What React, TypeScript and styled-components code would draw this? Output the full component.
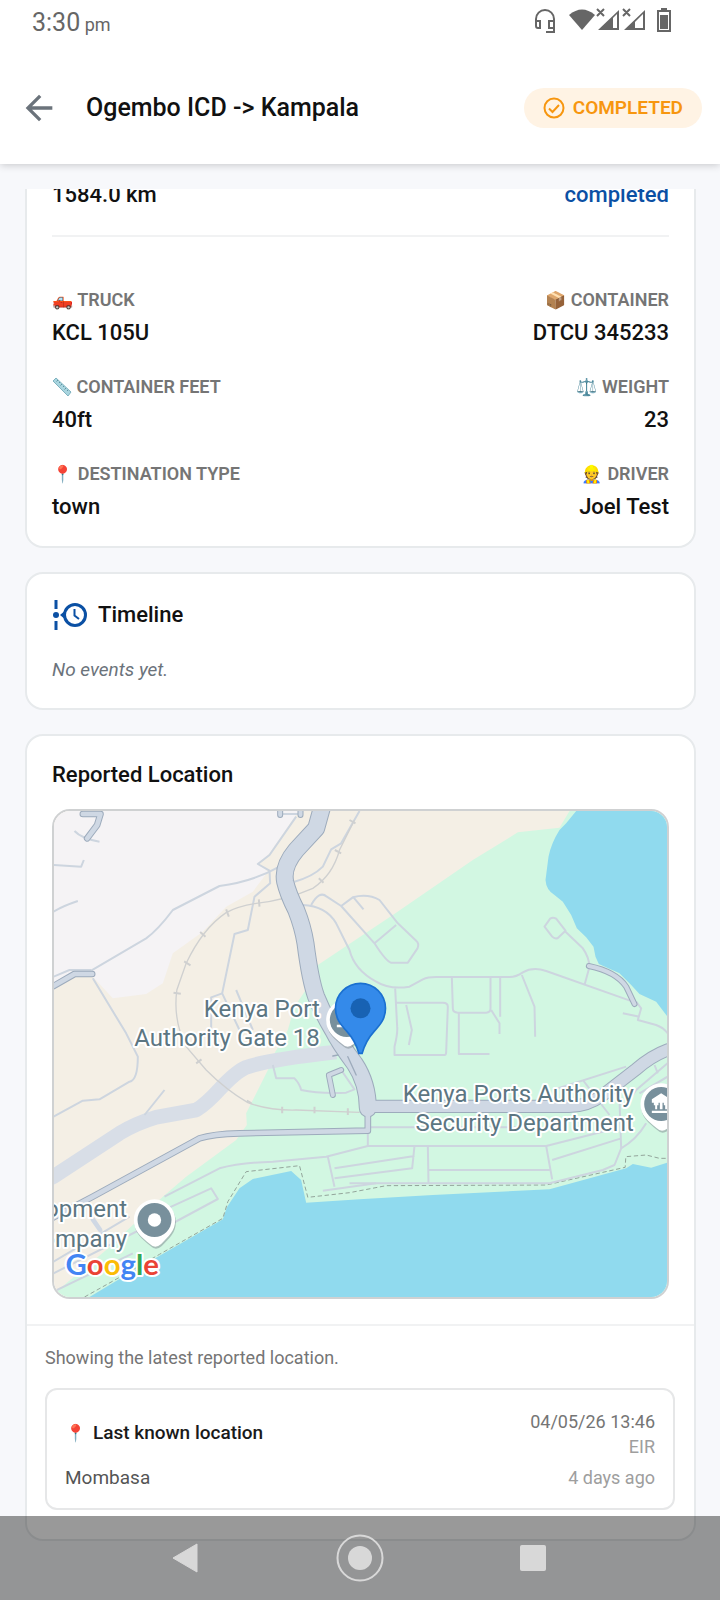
import styled, { createGlobalStyle } from "styled-components";
import { MdArrowBack } from "react-icons/md";

const RulerIcon = () => (
  <InlineSvg width="20" height="20" viewBox="0 0 20 20" aria-hidden="true">
    <path d="M1 4L4 1L19 15L16 19Z" fill="#a9d5df" stroke="#7fb3c0" strokeWidth="1" strokeLinejoin="round" />
    <path d="M6 3L4.500 4.500M8 5L7 6M10 7L8.500 8.500M12 9L11 10M14 11L12.500 12.500M16 13L15 14" stroke="#5f94a3" strokeWidth="1" />
  </InlineSvg>
);

const details = [
  { icon: "🛻", label: "TRUCK", value: "KCL 105U" },
  { icon: "📦", label: "CONTAINER", value: "DTCU 345233" },
  { icon: <RulerIcon />, label: "CONTAINER FEET", value: "40ft" },
  { icon: "⚖️", label: "WEIGHT", value: "23" },
  { icon: "📍", label: "DESTINATION TYPE", value: "town" },
  { icon: "👷", label: "DRIVER", value: "Joel Test" },
];

const minorRoads = [
  "M155 512L320 415Q355 390 400 330L540 258Q640 245 720 200",
  "M770 50L690 165L655 192L690 212L692 250L645 290L625 390L585 402L548 580L600 690",
  "M548 580L515 592V690M590 570L640 690",
  "M960 33L905 130L875 148L850 200Q820 230 765 245",
  "M790 315Q860 318 890 370L930 450Q945 510 1010 545Q1050 570 1110 560L1150 538Q1165 531 1190 531H1410Q1430 531 1450 517Q1480 500 1520 513L1780 605",
  "M815 315Q840 270 862 290L905 318L940 292Q985 280 1020 300L1075 370L1130 422Q1140 430 1134 445L1105 488H1055Q1040 485 1005 430L1070 375M905 318L1005 430M942 292L972 328",
  "M1067 565L1073 680Q1075 700 1065 740V765H1215Q1220 765 1220 755L1225 620Q1225 608 1210 608H1070M1100 615L1117 690L1108 735",
  "M1237 531L1240 625Q1240 638 1255 638H1340Q1353 638 1353 625V531M1258 638V762H1350M1355 630L1380 670V702M1382 533V650",
  "M1447 525L1485 620L1487 710",
  "M1515 380L1532 356Q1540 350 1550 356L1578 392L1555 414Q1546 418 1538 410ZM1578 395L1630 445Q1648 470 1650 500L1635 555",
  "M1790 605L1805 625L1795 660L1850 675Q1875 685 1884 700M1750 640L1800 650",
  "M42 195L125 200L133 180M42 335Q70 318 115 303M105 93Q125 115 180 125M42 530L90 510H155M722 42H783",
  "M160 535L260 700L295 770Q295 840 270 845L180 898L130 902L42 950M375 870L315 945",
  "M700 795L710 835H765Q780 850 785 870Q840 882 920 878L945 868L905 810",
  "M375 1190L540 1105Q600 1088 700 1085L860 1070L985 1038H1520L1730 985",
  "M865 1070L885 1160M885 1105L1125 1068M885 1135L1118 1105L1125 1038M850 1172L1010 1150M1165 1038L1167 1150M1167 1110H1530M1520 1038L1538 1138",
  "M1538 1080L1745 1015M1740 900L1745 1045L1725 1095L1690 1110L1530 1150H930M1745 1045Q1790 1020 1820 970M985 950V1038M985 982H1440M1630 840L1710 945M1540 870L1760 800",
  "M330 1250L515 1165L535 1197L390 1275M42 1385L270 1250M42 1420L300 1290M42 1475L280 1360",
  "M1884 790L1790 870L1770 900M1884 830L1800 880M1845 795L1855 820",
];

const casedRoads = [
  { d: "M130 42H183L173 75L143 115", width: 14 },
  { d: "M42 558L105 522H158", width: 14 },
  { d: "M722 33V45M783 33V45", width: 12 },
  { d: "M905 810L868 825L880 885", width: 12 },
  { d: "M1648 498Q1730 515 1760 560L1785 612", width: 12 },
  { d: "M42 1252L160 1190L480 1015Q520 1002 600 1000L985 992V930", width: 14 },
  { d: "M985 919H1580Q1640 922 1690 885L1790 808Q1835 768 1884 750", width: 34 },
  { d: "M848 20L830 85L770 150Q728 200 737 245Q745 280 770 330Q790 380 798 430Q812 540 830 590Q850 640 880 690Q900 730 945 790Q985 850 985 925", width: 48 },
];

const Label = ({ x, y, children }: { x: number; y: number; children: string }) => (
  <MapText x={x} y={y} textAnchor="end">
    {children}
  </MapText>
);

const PlacePin = ({ x, y, children }: { x: number; y: number; children?: React.ReactNode }) => (
  <g transform={`translate(${x} ${y})`}>
    <path
      d="M-62 0A62 62 0 1 1 62 0C62 34 42 48 20 72Q2 88 -14 72C-42 48 -62 34 -62 0Z"
      fill="#7d8a90"
      opacity="0.5"
      transform="translate(2 6)"
    />
    <path d="M-62 0A62 62 0 1 1 62 0C62 34 42 48 20 72Q2 88 -14 72C-42 48 -62 34 -62 0Z" fill="#fff" />
    <circle r="51" fill="#78909c" />
    {children}
  </g>
);

const MapDrawing = () => (
  <MapSvg viewBox="42 33 1842 1458" preserveAspectRatio="xMidYMid slice" role="img" aria-label="Map of the reported location">
    <rect x="0" y="0" width="1930" height="1530" fill="#f4efe5" />
    <path
      d="M0 0H800L690 160L655 192L685 215L640 275L560 320L490 395L400 460L370 550L320 582L220 595L155 525L100 520L0 580Z"
      fill="#f5f3f5"
    />
    <path
      d="M1560 83L1435 97L1300 180L1060 345L835 495L795 575L765 620L745 690L705 760L690 800L620 940L622 975L590 1020L440 1130L370 1190L200 1350L50 1475L0 1530H1930V0H1610Z"
      fill="#d2f7e2"
    />
    <path
      d="M1630 0L1610 33L1580 70L1560 90Q1535 130 1527 170L1518 240Q1520 270 1545 285L1570 305L1595 345L1612 385L1640 412L1662 440L1668 470L1678 492L1740 520L1775 555L1800 582L1850 605L1884 650L1930 700V0Z"
      fill="#90daee"
    />
    <path
      d="M80 1530L150 1491L240 1437L360 1367L550 1258L562 1222L600 1165L640 1137L755 1113L785 1140L800 1208L960 1198L1180 1185L1530 1168L1760 1105L1780 1092L1835 1103L1884 1088L1930 1080V1530Z"
      fill="#90daee"
    />
    <path
      d="M135 1491L240 1432L360 1363L550 1255L565 1205L620 1115L780 1097L805 1192L930 1178L1040 1157L1520 1155L1757 1102L1759 1070L1820 1065L1860 1075H1884"
      fill="none"
      stroke="#93a59b"
      strokeWidth="3"
      strokeDasharray="13 8"
    />
    <g fill="none" stroke="#cdd5df" strokeLinejoin="round">
      <path d="M0 1150L42 1130L240 1000Q290 970 350 952L470 930Q500 912 540 868Q590 815 620 802Q680 780 890 756" stroke="#d8dee7" strokeWidth="44" />
      {minorRoads.map((d) => (
        <path key={d} d={d} strokeWidth="6" />
      ))}
    </g>
    <g fill="none" stroke="#cfd0d0">
      <path
        d="M945 60L900 150Q880 225 820 265Q740 300 650 310Q590 320 560 338Q490 385 440 490L412 570Q400 660 440 740L500 810Q560 870 625 908Q690 932 770 930L960 937"
        strokeWidth="4"
      />
      <path
        d="M930 60L948 70M886 150L905 160M838 235L852 248M658 298L660 320M560 328L568 350M482 396L498 410M434 484L453 496M402 578L424 581M470 790L486 778M622 902L636 910M728 920V940M825 920V940M925 925V945"
        strokeWidth="6"
      />
    </g>
    <g fill="none" strokeLinejoin="round" strokeLinecap="round">
      {casedRoads.map(({ d, width }) => (
        <path key={d} d={d} stroke="#9dabbc" strokeWidth={width + 6} />
      ))}
      {casedRoads.map(({ d, width }) => (
        <path key={d} d={d} stroke="#cfd8e4" strokeWidth={width} />
      ))}
      <path d="M880 768L895 765M925 770L950 825" stroke="#9dabbc" strokeWidth="4" />
      <path d="M160 1258L182 1290" stroke="#cfd8e4" strokeWidth="14" />
    </g>

    <PlacePin x={922} y={660}>
      <path d="M-30 18H20M-22 -8H10" stroke="#fff" strokeWidth="7" />
    </PlacePin>
    <PlacePin x={345} y={1260}>
      <circle r="20" fill="#fff" />
    </PlacePin>
    <PlacePin x={1865} y={912}>
      <path
        d="M0 -32L28 -14V-4H-28V-14ZM-22 -4H-8V4H-12V16H-18V4H-22ZM-4 -4H4V16H-4ZM8 -4H22V4H18V16H12V4H8ZM-28 20H28V27H-28Z"
        fill="#fff"
      />
    </PlacePin>

    <Label x={841} y={650}>Kenya Port</Label>
    <Label x={841} y={738}>Authority Gate 18</Label>
    <Label x={1783} y={907}>Kenya Ports Authority</Label>
    <Label x={1783} y={993}>Security Department</Label>
    <Label x={263} y={1252}>opment</Label>
    <Label x={263} y={1340}>ompany</Label>

    <path
      d="M888 625A75 75 0 1 1 1038 625C1038 655 1024 672 1004 694C984 716 974 738 968 760H958C952 738 942 716 922 694C902 672 888 655 888 625Z"
      fill="#348aea"
      stroke="#1b70d0"
      strokeWidth="5"
    />
    <circle cx="963" cy="625" r="30" fill="#1862b3" />

    <GoogleText x="78" y="1425">
      <tspan fill="#4285f4">G</tspan>
      <tspan fill="#ea4335">o</tspan>
      <tspan fill="#fbbc05">o</tspan>
      <tspan fill="#4285f4">g</tspan>
      <tspan fill="#34a853">l</tspan>
      <tspan fill="#ea4335">e</tspan>
    </GoogleText>
  </MapSvg>
);

const App: React.FC = () => {
  return (
    <StyledApp>
      <GlobalStyle />
      <TopArea>
        <StatusBar>
          <Clock>
            3:30<small> pm</small>
          </Clock>
          <svg width="138" height="26" viewBox="0 0 138 26" fill="none">
            <g stroke="#666" strokeWidth="2">
              <path d="M0 15V11A9 9 0 0 1 18 11V24H10" />
              <path d="M0 13H4V20H2Q0 20 0 18ZM18 13H13V20H18Z" />
            </g>
            <path d="M33 7Q46 -4 59 7L46 22Z" fill="#666" />
            <path d="M62 22L83 2V22ZM88 22L109 2V22Z" fill="#666" />
            <path d="M77 10L81 6V20H77ZM103 10L107 6V20H99V14Z" fill="#fff" />
            <path d="M61 1L68 8M68 1L61 8M87 1L94 8M94 1L87 8" stroke="#666" strokeWidth="2" />
            <path d="M125 1H131" stroke="#666" strokeWidth="2" />
            <rect x="122" y="3" width="12" height="20" stroke="#666" strokeWidth="2" />
            <rect x="124" y="7" width="8" height="14" fill="#666" />
          </svg>
        </StatusBar>
        <Header>
          <BackButton type="button" aria-label="Back">
            <MdArrowBack size={40} />
          </BackButton>
          <Title>Ogembo ICD -&gt; Kampala</Title>
          <StatusBadge>
            <svg width="22" height="22" viewBox="0 0 22 22" fill="none" stroke="#f7960f" strokeWidth="2">
              <circle cx="11" cy="11" r="9.500" />
              <path d="M6 11.500L9.500 15L16 8" />
            </svg>
            COMPLETED
          </StatusBadge>
        </Header>
      </TopArea>

      <ScrollArea>
        <CardList>
          <TripCard>
            <SummaryRow>
              <Value>1584.0 km</Value>
              <StatusValue>completed</StatusValue>
            </SummaryRow>
            <DetailGrid>
              {details.map(({ icon, label, value }) => (
                <DetailItem key={label}>
                  <DetailLabel>
                    <Emoji>{icon}</Emoji> {label}
                  </DetailLabel>
                  <Value>{value}</Value>
                </DetailItem>
              ))}
            </DetailGrid>
          </TripCard>

          <TimelineCard>
            <TimelineHead>
              <svg width="36" height="32" viewBox="0 0 36 32" fill="none" stroke="#0b50a4" strokeWidth="3">
                <path d="M4 1V10M4 22V31" />
                <circle cx="4" cy="16" r="3" fill="#0b50a4" stroke="none" />
                <path d="M8 16L14 11V21Z" fill="#0b50a4" stroke="none" />
                <circle cx="23" cy="16" r="10.500" />
                <path d="M22.500 10V16.500L27 20" strokeWidth="2" />
              </svg>
              <CardTitle>Timeline</CardTitle>
            </TimelineHead>
            <EmptyText>No events yet.</EmptyText>
          </TimelineCard>

          <Card>
            <MapSection>
              <CardTitle>Reported Location</CardTitle>
              <MapFrame>
                <MapDrawing />
              </MapFrame>
            </MapSection>
            <LocationSection>
              <Hint>Showing the latest reported location.</Hint>
              <LocationBox>
                <LocationRow>
                  <LocationTitle>
                    <Emoji>📍</Emoji> Last known location
                  </LocationTitle>
                  <ReportTime>
                    <time>04/05/26 13:46</time>
                    <Faded>EIR</Faded>
                  </ReportTime>
                </LocationRow>
                <LocationRow>
                  <Place>Mombasa</Place>
                  <Faded>4 days ago</Faded>
                </LocationRow>
              </LocationBox>
            </LocationSection>
          </Card>
        </CardList>
      </ScrollArea>

      <NavBar>
        <NavButton type="button" aria-label="Back">
          <svg width="48" height="48" viewBox="0 0 48 48">
            <path d="M11 24L35 10V38Z" fill="#d8d8d8" stroke="#d8d8d8" strokeWidth="1" strokeLinejoin="round" />
          </svg>
        </NavButton>
        <NavButton type="button" aria-label="Home">
          <svg width="48" height="48" viewBox="0 0 48 48">
            <circle cx="24" cy="24" r="22.500" fill="none" stroke="#d8d8d8" strokeWidth="2" />
            <circle cx="24" cy="24" r="12" fill="#d8d8d8" />
          </svg>
        </NavButton>
        <NavButton type="button" aria-label="Recent apps">
          <svg width="48" height="48" viewBox="0 0 48 48">
            <rect x="10" y="11" width="26" height="26" rx="2" fill="#d8d8d8" />
          </svg>
        </NavButton>
      </NavBar>
    </StyledApp>
  );
};

const GlobalStyle = createGlobalStyle`
  * {
    box-sizing: border-box;
  }
  body {
    margin: 0;
    background: #f7f8fb;
    color: #111;
    font-family: Roboto, "Noto Color Emoji", sans-serif;
  }
  h1, h2, p {
    margin: 0;
  }
  button {
    border: 0;
    padding: 0;
    background: none;
    font: inherit;
  }
  svg {
    display: block;
    overflow: visible;
  }
`;

const StyledApp = styled.div`
  min-height: 100vh;
`;

const TopArea = styled.div`
  height: 164px;
  background: #fff;
  box-shadow: 0 1px 8px rgba(0, 0, 0, 0.2);
`;

const StatusBar = styled.div`
  height: 52px;
  padding: 8px 46px 0 32px;
  display: flex;
  justify-content: space-between;
`;

const Clock = styled.div`
  color: #666;
  font-size: 25px;
  line-height: 30px;

  small {
    font-size: 18px;
  }
`;

const Header = styled.header`
  height: 112px;
  padding: 0 18px 0 19px;
  display: flex;
  align-items: center;
`;

const BackButton = styled.button`
  color: #6b737b;
`;

const Title = styled.h1`
  flex: 1;
  margin-left: 27px;
  font-size: 25px;
  font-weight: 500;
  line-height: 32px;
`;

const StatusBadge = styled.div`
  height: 40px;
  padding: 0 19px;
  border-radius: 20px;
  display: flex;
  align-items: center;
  gap: 8px;
  background: #fff3e4;
  color: #f7960f;
  font-size: 19px;
  font-weight: 600;
  line-height: 22px;
`;

const ScrollArea = styled.main`
  margin-top: 25px;
  overflow: hidden;
`;

/* list is scrolled up a little, the first card starts above the visible area */
const CardList = styled.div`
  margin-top: -24px;
  padding: 0 24px 60px 25px;
  display: flex;
  flex-direction: column;
  gap: 24px;
`;

const Card = styled.section`
  border: 2px solid #e7eaec;
  border-radius: 18px;
  background: #fff;
`;

const TripCard = styled(Card)`
  border-top: 0;
  border-radius: 0 0 18px 18px;
  padding: 15px 25px 24px;
`;

const TimelineCard = styled(Card)`
  padding: 24px 25px;
`;

const SummaryRow = styled.div`
  padding-bottom: 25px;
  border-bottom: 2px solid #f1f2f3;
  display: flex;
  justify-content: space-between;
`;

const DetailGrid = styled.div`
  padding-top: 50px;
  display: grid;
  grid-template-columns: 1fr 1fr;
  row-gap: 26px;
`;

const DetailItem = styled.div`
  &:nth-child(even) {
    text-align: right;
  }
`;

const DetailLabel = styled.div`
  margin-bottom: 5px;
  color: #757575;
  font-size: 18px;
  font-weight: 600;
  line-height: 26px;
`;

const Value = styled.div`
  font-size: 22px;
  font-weight: 500;
  line-height: 30px;
`;

const StatusValue = styled(Value)`
  color: #0b50a4;
`;

const Emoji = styled.span`
  font-size: 17px;
`;

const InlineSvg = styled.svg`
  display: inline-block;
  vertical-align: -4px;
`;

const TimelineHead = styled.div`
  display: flex;
  align-items: center;
  gap: 10px;
`;

const CardTitle = styled.h2`
  font-size: 22px;
  font-weight: 500;
  line-height: 34px;
`;

const EmptyText = styled.p`
  margin-top: 24px;
  color: #6b737b;
  font-size: 19px;
  font-style: italic;
  line-height: 28px;
`;

const MapSection = styled.div`
  padding: 22px 25px 25px;
`;

const MapFrame = styled.div`
  height: 490px;
  margin-top: 17px;
  border: 2px solid #cfd1d2;
  border-radius: 18px;
  overflow: hidden;
`;

const MapSvg = styled.svg`
  width: 100%;
  height: 100%;
`;

const MapText = styled.text`
  fill: #5c7682;
  stroke: #fff;
  stroke-width: 12px;
  stroke-linejoin: round;
  paint-order: stroke;
  font-family: Roboto, sans-serif;
  font-size: 72px;
`;

const GoogleText = styled.text`
  stroke: #fff;
  stroke-width: 12px;
  stroke-linejoin: round;
  paint-order: stroke;
  font-family: Lato, sans-serif;
  font-size: 88px;
  font-weight: 700;
`;

const LocationSection = styled.div`
  padding: 20px 19px 29px 18px;
  border-top: 2px solid #f1f2f3;
`;

const Hint = styled.p`
  color: #757575;
  font-size: 18px;
  line-height: 24px;
`;

const LocationBox = styled.div`
  margin-top: 18px;
  padding: 19px 18px 18px;
  border: 2px solid #e6e7e8;
  border-radius: 12px;
`;

const LocationRow = styled.div`
  display: flex;
  justify-content: space-between;
  align-items: center;

  & + & {
    margin-top: 6px;
  }
`;

const LocationTitle = styled.div`
  padding-bottom: 4px;
  color: #1a1a1a;
  font-size: 19px;
  font-weight: 500;

  ${Emoji} {
    margin-right: 2px;
  }
`;

const ReportTime = styled.div`
  color: #757575;
  font-size: 18px;
  line-height: 25px;
  text-align: right;
`;

const Faded = styled.div`
  color: #9e9e9e;
  font-size: 18px;
  line-height: 25px;
`;

const Place = styled.div`
  color: #555;
  font-size: 19px;
`;

const NavBar = styled.nav`
  position: fixed;
  left: 0;
  right: 0;
  bottom: 0;
  height: 84px;
  display: flex;
  justify-content: center;
  align-items: center;
  gap: 126px;
  background: rgba(0, 0, 0, 0.4);
`;

const NavButton = styled.button`
  width: 48px;
  height: 48px;
`;

export default App;
